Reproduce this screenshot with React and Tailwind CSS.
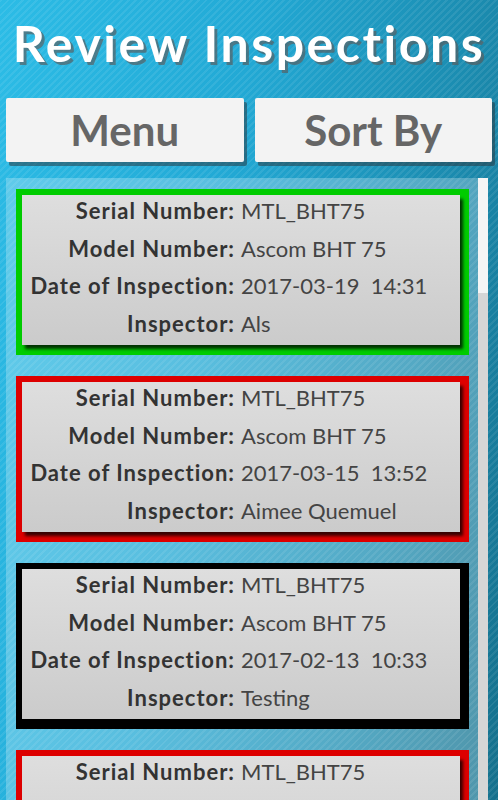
const inspections = [
  { border: "bg-[#00cc00]", serial: "MTL_BHT75", model: "Ascom BHT 75", date: "2017-03-19  14:31", inspector: "Als" },
  { border: "bg-[#dd0000]", serial: "MTL_BHT75", model: "Ascom BHT 75", date: "2017-03-15  13:52", inspector: "Aimee Quemuel" },
  { border: "bg-black", serial: "MTL_BHT75", model: "Ascom BHT 75", date: "2017-02-13  10:33", inspector: "Testing" },
  { border: "bg-[#dd0000]", serial: "MTL_BHT75", model: "Ascom BHT 75", date: "2017-02-10  09:12", inspector: "Als" },
]

function Row({ label, value }) {
  return (
    <>
      <div className="text-right font-bold text-[#333] tracking-[1px] whitespace-nowrap">{label}</div>
      <div className="whitespace-pre text-[#444]">{value}</div>
    </>
  )
}

function InspectionCard({ item }) {
  return (
    <div className={`${item.border} shrink-0 pt-[6px] pl-[6px] pr-[9px] pb-[10px]`}>
      <div className="h-[150px] pb-[6px] bg-gradient-to-b from-[#dedede] to-[#cbcbcb] shadow-[3px_4px_3px_rgba(0,0,0,0.75)] grid grid-cols-[213px_1fr] gap-x-[6px] content-center text-[22px] leading-[37.5px]">
        <Row label="Serial Number:" value={item.serial} />
        <Row label="Model Number:" value={item.model} />
        <Row label="Date of Inspection:" value={item.date} />
        <Row label="Inspector:" value={item.inspector} />
      </div>
    </div>
  )
}

export default function App() {
  return (
    <div className="h-[800px] w-[498px] overflow-hidden font-['Lato','Open_Sans',sans-serif] bg-[repeating-linear-gradient(135deg,rgba(255,255,255,0.08)_0px,rgba(255,255,255,0.08)_2px,transparent_2px,transparent_5px),linear-gradient(100deg,#2cbce6_0%,#22a9d5_40%,#1b8cb0_75%,#15708c_100%)] flex flex-col">

      {/* Title */}
      <h1 className="shrink-0 h-[90px] pt-[11px] text-center text-[50px] font-bold text-white leading-[64px] tracking-[2.5px] whitespace-nowrap [text-shadow:3px_3px_0_rgba(90,90,90,0.65)]">
        Review Inspections
      </h1>

      {/* Buttons */}
      <div className="shrink-0 flex gap-[11px] px-[6px] pt-[8px]">
        <button className="flex-1 h-[64px] bg-[#f3f3f3] rounded-[2px] shadow-[3px_4px_0_rgba(40,60,70,0.55)] text-[42px] font-bold text-[#666] leading-none">
          Menu
        </button>
        <button className="flex-1 h-[64px] bg-[#f3f3f3] rounded-[2px] shadow-[3px_4px_0_rgba(40,60,70,0.55)] text-[42px] font-bold text-[#666] leading-none">
          Sort By
        </button>
      </div>

      {/* List */}
      <div className="shrink-0 h-[622px] mt-[16px] ml-[6px] mr-[10px] bg-white/25 flex overflow-hidden">
        <div className="flex-1 flex flex-col gap-[21px] pt-[11px] pl-[10px] pr-[9px]">
          {inspections.map((item, i) => (
            <InspectionCard key={i} item={item} />
          ))}
        </div>
        <div className="w-[10px] bg-[#d6d6d6] flex flex-col">
          <div className="h-[115px] bg-[#f5f5f5]" />
        </div>
      </div>
    </div>
  )
}
